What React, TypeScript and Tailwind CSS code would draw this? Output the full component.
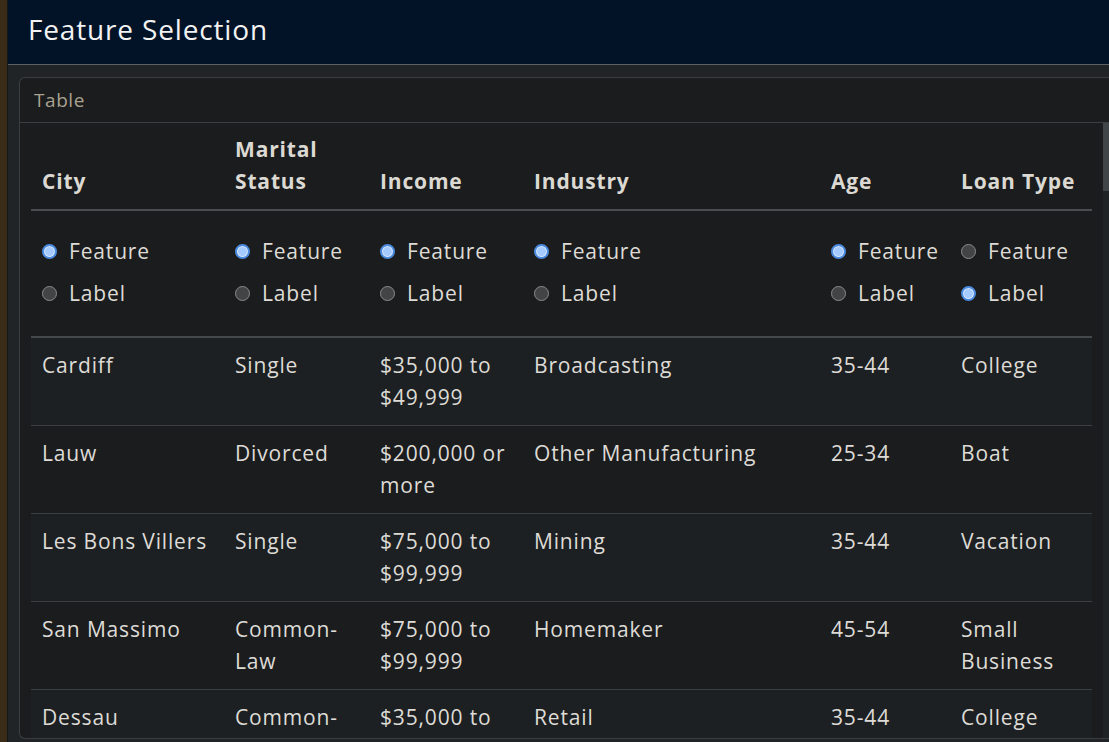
const rows = [
  ["Cardiff", "Single", "$35,000 to $49,999", "Broadcasting", "35-44", "College"],
  ["Lauw", "Divorced", "$200,000 or more", "Other Manufacturing", "25-34", "Boat"],
  ["Les Bons Villers", "Single", "$75,000 to $99,999", "Mining", "35-44", "Vacation"],
  ["San Massimo", "Common-Law", "$75,000 to $99,999", "Homemaker", "45-54", "Small Business"],
  ["Dessau", "Common-Law", "$35,000 to $49,999", "Retail", "35-44", "College"],
]

const columns = [
  { name: "City", width: "w-[193px]", feature: true },
  { name: "Marital Status", width: "w-[145px]", feature: true },
  { name: "Income", width: "w-[154px]", feature: true },
  { name: "Industry", width: "w-[297px]", feature: true },
  { name: "Age", width: "w-[130px]", feature: true },
  { name: "Loan Type", width: "w-[142px]", feature: false },
]

function Radio({ checked, label }: { checked: boolean; label: string }) {
  return (
    <label className="flex items-center h-[32px] whitespace-nowrap">
      <span
        className={
          checked
            ? "w-[15px] h-[15px] rounded-full border-2 border-[#4a8ade] bg-[#a4caff] shadow-[inset_0_0_0_1px_#d9e8ff] mr-[12px] shrink-0"
            : "w-[15px] h-[15px] rounded-full border border-[#8a8b8c] bg-[#434445] mr-[12px] shrink-0"
        }
      />
      <span>{label}</span>
    </label>
  )
}

export default function App() {
  return (
    <div
      className="h-[742px] w-[1109px] flex bg-[#202427] overflow-hidden text-[#dedbd6]"
      style={{ fontFamily: "'Open Sans', 'Noto Sans', sans-serif" }}
    >
      <div className="w-[8px] bg-[#3a2c17] border-r border-[#15171a]" />
      <div className="flex-1 flex flex-col min-w-0">
        <header className="h-[65px] shrink-0 bg-[#021327] border-b border-[#5d6165] flex items-center pl-[20px] pb-[7px]">
          <h1 className="text-[28px] tracking-[0.03em] text-[#f2f2f2] leading-none">Feature Selection</h1>
        </header>
        <div className="flex-1 min-h-0 pl-[11px] pt-[12px] pb-[3px] flex">
          <section className="flex-1 min-w-0 flex flex-col border-l border-t border-b border-[#3b3e41] rounded-l-[6px] bg-[#1b1c1d]">
            <div className="h-[45px] shrink-0 flex items-center px-[14px] pt-[1px] border-b border-[#3b3e41] text-[19px] tracking-[0.03em] text-[#a9a291]">
              Table
            </div>
            <div className="flex-1 min-h-0 flex">
              <div className="flex-1 min-w-0 overflow-hidden px-[11px]">
                <table className="table-fixed w-[1061px] border-collapse text-[21px] tracking-[0.04em] leading-[32px]">
                  <colgroup>
                    {columns.map((c) => (
                      <col key={c.name} className={c.width} />
                    ))}
                  </colgroup>
                  <thead>
                    <tr className="border-b-2 border-[#4a4d50]">
                      {columns.map((c) => (
                        <th
                          key={c.name}
                          className="text-left align-bottom font-bold px-[11px] pt-[10px] pb-[12px] text-[#dcd9d3]"
                        >
                          {c.name}
                        </th>
                      ))}
                    </tr>
                  </thead>
                  <tbody>
                    <tr className="border-b-2 border-[#45484b]">
                      {columns.map((c) => (
                        <td key={c.name} className="px-[11px] pt-[24px] pb-[27px] align-top">
                          <div className="flex flex-col gap-[10px]">
                            <Radio checked={c.feature} label="Feature" />
                            <Radio checked={!c.feature} label="Label" />
                          </div>
                        </td>
                      ))}
                    </tr>
                    {rows.map((r, i) => (
                      <tr
                        key={r[0]}
                        className={
                          i % 2 === 0
                            ? "bg-[#1d2022] border-b border-[#3c3f42]"
                            : "bg-[#1b1c1e] border-b border-[#3c3f42]"
                        }
                      >
                        {r.map((v, j) => (
                          <td key={j} className="px-[11px] pt-[11px] pb-[12px] align-top">
                            {v}
                          </td>
                        ))}
                      </tr>
                    ))}
                  </tbody>
                </table>
              </div>
              <div className="w-[6px] shrink-0 bg-[#1f2326]">
                <div className="h-[68px] bg-[#3f4548]" />
              </div>
            </div>
          </section>
        </div>
      </div>
    </div>
  )
}
